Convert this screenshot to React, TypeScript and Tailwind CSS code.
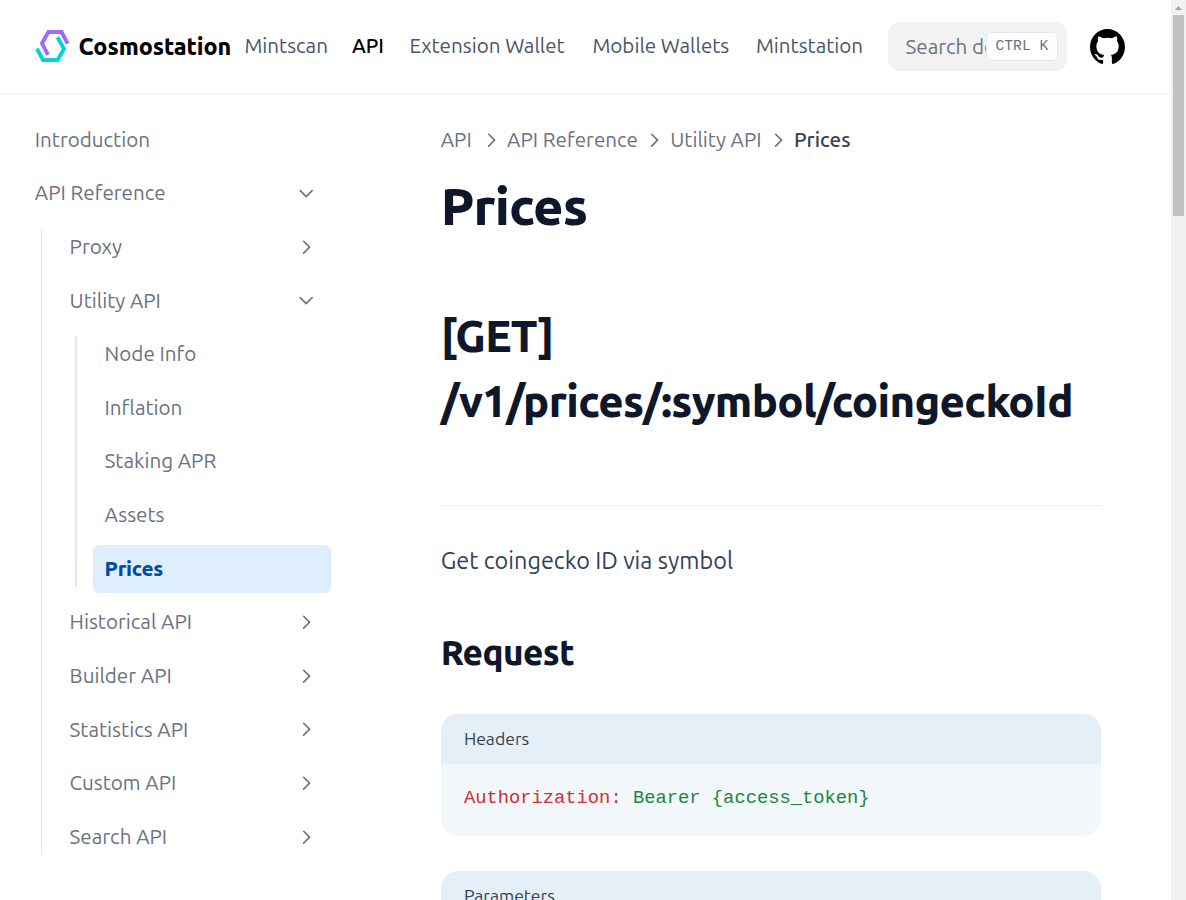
import type { ReactNode } from 'react';

const Chevron = ({ down = false }: { down?: boolean }) => (
  <svg viewBox="0 0 24 24" fill="none" stroke="currentColor" strokeWidth="1.9" strokeLinecap="round" strokeLinejoin="round" className={down ? 'size-[20.4px] shrink-0 rotate-90' : 'size-[20.4px] shrink-0'}>
    <path d="M9 5l7 7-7 7" />
  </svg>
);

const Logo = () => (
  <svg viewBox="0 0 35 32" fill="none" strokeWidth="3.9" className="h-8 w-[35px] shrink-0">
    <path d="M32.7 13.6 26.6 2H13.4L7 13.4 13 24.9" stroke="#9c6cff" />
    <path d="M1.9 18.6 8 30h14.6L29 18.9 22.5 7.3" stroke="#05d2dd" />
  </svg>
);

const GitHub = () => (
  <svg viewBox="3 3 18 18" fill="#000" className="size-[35px] shrink-0">
    <path d="M12 3C7.0275 3 3 7.12937 3 12.2276C3 16.3109 5.57625 19.7597 9.15374 20.9824C9.60374 21.0631 9.77249 20.7863 9.77249 20.5441C9.77249 20.3249 9.76125 19.5982 9.76125 18.8254C7.5 19.2522 6.915 18.2602 6.735 17.7412C6.63375 17.4759 6.19499 16.6569 5.8125 16.4378C5.4975 16.2647 5.0475 15.838 5.80124 15.8264C6.51 15.8149 7.01625 16.4954 7.18499 16.7723C7.99499 18.1679 9.28875 17.7758 9.80625 17.5335C9.885 16.9337 10.1212 16.53 10.38 16.2993C8.3775 16.0687 6.285 15.2728 6.285 11.7432C6.285 10.7397 6.63375 9.9092 7.20749 9.26326C7.1175 9.03257 6.8025 8.08674 7.2975 6.81794C7.2975 6.81794 8.05125 6.57571 9.77249 7.76377C10.4925 7.55615 11.2575 7.45234 12.0225 7.45234C12.7875 7.45234 13.5525 7.55615 14.2725 7.76377C15.9937 6.56418 16.7475 6.81794 16.7475 6.81794C17.2424 8.08674 16.9275 9.03257 16.8375 9.26326C17.4113 9.9092 17.76 10.7281 17.76 11.7432C17.76 15.2843 15.6563 16.0687 13.6537 16.2993C13.98 16.5877 14.2613 17.1414 14.2613 18.0065C14.2613 19.2407 14.25 20.2326 14.25 20.5441C14.25 20.7863 14.4188 21.0746 14.8688 20.9824C16.6554 20.364 18.2079 19.1866 19.3078 17.6162C20.4077 16.0457 20.9995 14.1611 21 12.2276C21 7.12937 16.9725 3 12 3Z" />
  </svg>
);

const Row = ({ label, state }: { label: string; state?: 'open' | 'closed' | 'active' }) => (
  <div className={state === 'active'
    ? 'flex h-12 items-center justify-between rounded-md bg-[#dfeeff] px-[11.6px] font-extrabold tracking-[-0.01em] text-[#004ca3]'
    : 'flex h-12 items-center justify-between px-[11.6px] text-gray-500'}>
    <span>{label}</span>
    {(state === 'open' || state === 'closed') && <span className="pr-[3px]"><Chevron down={state === 'open'} /></span>}
  </div>
);

const CodeBlock = ({ title, children }: { title: string; children: ReactNode }) => (
  <div className="overflow-hidden rounded-[17.5px] bg-[#f2f7fc]">
    <div className="flex h-[50px] items-center bg-[#e5eff8] px-[23.2px] text-[17.6px] text-gray-700">{title}</div>
    <pre className="h-[72px] px-[23.2px] pt-[19px] font-['Liberation_Mono',monospace] text-[18.8px] leading-[30px]">{children}</pre>
  </div>
);

export default function App() {
  return (
    <div className="flex h-[900px] w-full overflow-hidden bg-white font-['Ubuntu','Noto_Sans',sans-serif] text-[20.6px] leading-7">
      <div className="flex min-w-0 flex-1 flex-col">
        <header className="flex h-[93px] shrink-0 items-center pl-[34.6px] text-gray-600 shadow-[0_2px_4px_rgba(0,0,0,.02),0_1px_0_rgba(0,0,0,.06)]">
          <div className="flex items-center pb-[2px]">
            <Logo />
            <span className="ml-[9px] w-[165.8px] text-[23.3px] font-extrabold tracking-[-0.003em] text-black">Cosmostation</span>
            <nav className="flex whitespace-nowrap">
              <a className="w-[107.5px]">Mintscan</a>
              <a className="w-[57.5px] font-medium text-black">API</a>
              <a className="w-[183px]">Extension Wallet</a>
              <a className="w-[163.5px]">Mobile Wallets</a>
              <a className="w-[132px]">Mintstation</a>
            </nav>
          </div>
          <div className="flex h-[49px] w-[179px] shrink-0 items-center rounded-xl bg-[#f2f2f2] pr-[9px] pl-[17.6px] text-gray-500">
            <span className="min-w-0 flex-1 overflow-hidden whitespace-nowrap">Search documentation…</span>
            <kbd className="flex h-[29px] w-[72px] shrink-0 items-center justify-center rounded-md border border-gray-200 bg-white pb-[2px] font-['Liberation_Mono',monospace] text-[14.7px] whitespace-pre">CTRL K</kbd>
          </div>
          <a className="ml-[23px]"><GitHub /></a>
        </header>
        <div className="flex min-h-0 flex-1">
          <aside className="flex w-[331px] shrink-0 flex-col gap-[5.63px] pt-[22.7px] pl-[23.2px]">
            <Row label="Introduction" />
            <Row label="API Reference" state="open" />
            <div className="flex pl-[17.8px]">
              <div className="my-[5.9px] w-px bg-gray-200" />
              <div className="flex flex-1 flex-col gap-[5.63px] pl-[16px]">
                <Row label="Proxy" state="closed" />
                <Row label="Utility API" state="open" />
                <div className="flex pl-[17px]">
                  <div className="my-[5.9px] w-0.5 bg-gray-200" />
                  <div className="flex flex-1 flex-col gap-[5.63px] pl-[16px]">
                    <Row label="Node Info" />
                    <Row label="Inflation" />
                    <Row label="Staking APR" />
                    <Row label="Assets" />
                    <Row label="Prices" state="active" />
                  </div>
                </div>
                <Row label="Historical API" state="closed" />
                <Row label="Builder API" state="closed" />
                <Row label="Statistics API" state="closed" />
                <Row label="Custom API" state="closed" />
                <Row label="Search API" state="closed" />
              </div>
            </div>
          </aside>
          <main className="ml-[109.7px] w-[660.6px] pt-[33px] text-slate-900">
            <div className="flex items-center gap-[6px] text-gray-500">
              <span className="pr-[3px]">API</span>
              <Chevron />
              <span>API Reference</span>
              <Chevron />
              <span>Utility API</span>
              <Chevron />
              <span className="font-medium text-gray-700">Prices</span>
            </div>
            <h1 className="mt-[22px] text-[52.3px] leading-[60px] font-extrabold tracking-[-0.016em]">Prices</h1>
            <h2 className="mt-[67px] border-b border-[#ededed] pb-[72px] text-[43.5px] leading-[65px] font-extrabold tracking-[-0.0155em]">[GET]<br />/v1/prices/:symbol/coingeckoId</h2>
            <p className="mt-[34px] text-[23.4px] leading-10 tracking-[0.03px] text-slate-700">Get coingecko ID via symbol</p>
            <h3 className="mt-12 text-[34.9px] leading-[48px] font-extrabold tracking-[-0.015em]">Request</h3>
            <div className="mt-[38px] flex flex-col gap-[35px]">
              <CodeBlock title="Headers"><span className="text-[#d32f2f]">Authorization:</span><span className="text-[#22863a]"> Bearer {'{access_token}'}</span></CodeBlock>
              <CodeBlock title="Parameters">{''}</CodeBlock>
            </div>
          </main>
        </div>
      </div>
      <div className="flex w-[15px] shrink-0 flex-col items-center bg-[#f1f1f1]">
        <svg viewBox="0 0 15 15" className="size-[15px] shrink-0"><path d="M4 10 7.5 6 11 10z" fill="#a3a3a3" /></svg>
        <div className="h-[201px] w-[11px] shrink-0 bg-[#c1c1c1]" />
      </div>
    </div>
  );
}
